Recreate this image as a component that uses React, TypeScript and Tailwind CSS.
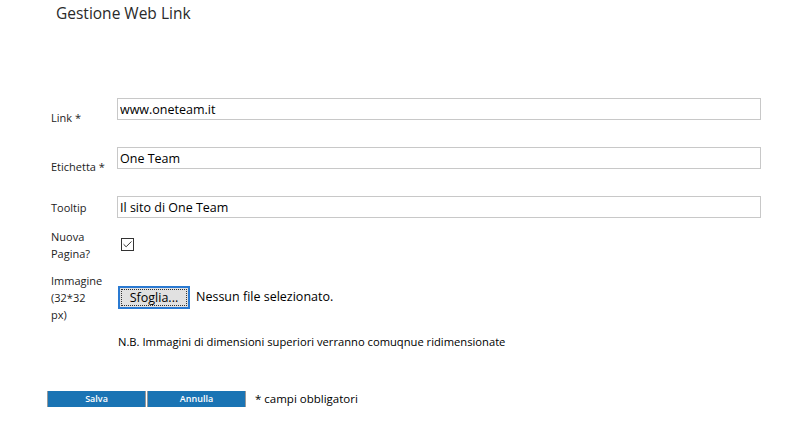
import { Check } from "lucide-react";

const font = { fontFamily: '"Open Sans", "Noto Sans", sans-serif' };

function TextRow({
  label,
  value,
  labelClass,
}: {
  label: string;
  value: string;
  labelClass: string;
}) {
  return (
    <div className="flex h-[22px] items-start">
      <div className={`w-[66px] shrink-0 text-[11px] leading-[11px] text-[#222] ${labelClass}`}>{label}</div>
      <input
        readOnly
        value={value}
        className="h-[22px] w-[644px] border border-[#c8c8c8] bg-white px-[2px] text-[12.5px] text-black outline-none"
      />
    </div>
  );
}

export default function App() {
  return (
    <div className="h-[431px] w-[795px] overflow-hidden bg-white text-[#222]" style={font}>
      <div className="h-[25px] pl-[56px] pt-[2px] text-[15.5px] leading-[23px] text-[#2a2a2a]">Gestione Web Link</div>

      <div className="mt-[73px] flex flex-col pl-[51px]">
        <TextRow label="Link *" value="www.oneteam.it" labelClass="pt-[14px]" />
        <div className="h-[27px] shrink-0" />
        <TextRow label="Etichetta *" value="One Team" labelClass="pt-[14px]" />
        <div className="h-[27px] shrink-0" />
        <TextRow label="Tooltip" value="Il sito di One Team" labelClass="pt-[6px]" />

        <div className="mt-[10px] flex items-start">
          <div className="w-[66px] shrink-0 text-[11px] leading-[17px]">
            Nuova
            <br />
            Pagina?
          </div>
          <div className="ml-[4px] mt-[10px] flex h-[13px] w-[13px] items-center justify-center border border-[#333] bg-white">
            <Check className="h-[11px] w-[11px] text-[#222]" strokeWidth={2} />
          </div>
        </div>

        <div className="mt-[10px] flex items-start">
          <div className="w-[66px] shrink-0 text-[11px] leading-[17px]">
            Immagine
            <br />
            (32*32
            <br />
            px)
          </div>
          <div className="ml-[1px] mt-[14px] flex items-center">
            <button className="h-[23px] w-[72px] border-2 border-[#2a7ad2] bg-[#e1e1e1] p-[1px] text-[12.5px] text-black">
              <span className="block h-full w-full border border-dotted border-[#333] leading-[16px]">
                Sfoglia...
              </span>
            </button>
            <span className="ml-[6px] text-[12.5px] text-black">Nessun file selezionato.</span>
          </div>
        </div>

        <div className="mt-[10px] pl-[67px] text-[11.2px] leading-[17px] text-black">
          N.B. Immagini di dimensioni superiori verranno comuqnue ridimensionate
        </div>
      </div>

      <div className="mt-[40px] flex items-center pl-[47px]">
        <button className="h-[16px] w-[99px] border-x border-[#9a9a9a] bg-[#1a74b4] text-[9px] font-semibold leading-[14px] text-white">
          Salva
        </button>
        <button className="ml-[1px] h-[16px] w-[99px] border-x border-[#9a9a9a] bg-[#1a74b4] text-[9px] font-semibold leading-[14px] text-white">
          Annulla
        </button>
        <span className="ml-[9px] text-[11.5px] text-black">* campi obbligatori</span>
      </div>
    </div>
  );
}
